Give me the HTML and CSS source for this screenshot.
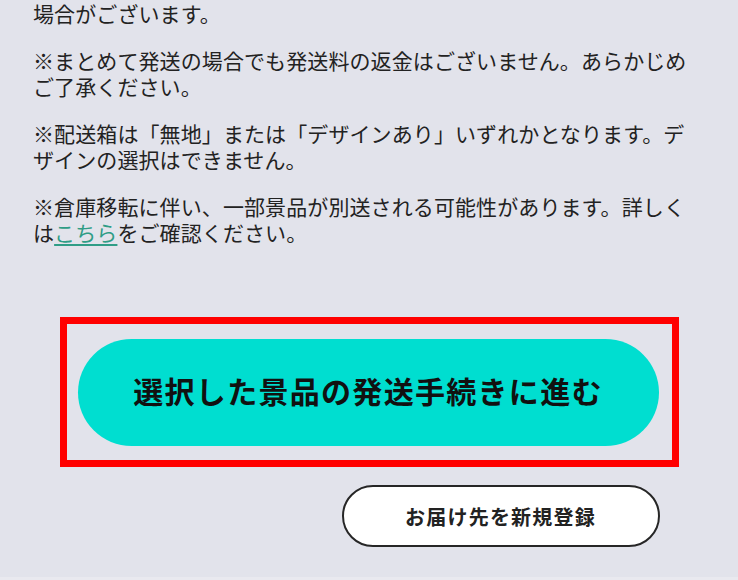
FILE: index.html
```html
<!DOCTYPE html>
<html lang="ja">
<head>
<meta charset="utf-8">
<title>発送手続き</title>
<link rel="stylesheet" href="styles.css">
</head>
<body>
<div class="page">
  <section class="notes">
    <p class="note">場合がございます。</p>
    <p class="note">※まとめて発送の場合でも発送料の返金はございません。あらかじめご了承ください。</p>
    <p class="note">※配送箱は「無地」または「デザインあり」いずれかとなります。デザインの選択はできません。</p>
    <p class="note">※倉庫移転に伴い、一部景品が別送される可能性があります。詳しくは<a class="link" href="#">こちら</a>をご確認ください。</p>
  </section>
  <section class="actions">
    <div class="highlight">
      <button class="btn-primary" type="button">選択した景品の発送手続きに進む</button>
    </div>
    <div class="secondary-row">
      <button class="btn-secondary" type="button">お届け先を新規登録</button>
    </div>
  </section>
</div>
<div class="bottom-strip"></div>
</body>
</html>
```
FILE: styles.css
```css
html, body {
  margin: 0;
  padding: 0;
}
body {
  background: #e2e3eb;
  font-family: "Noto Sans CJK JP", "Noto Sans", sans-serif;
  color: #222222;
  width: 738px;
  height: 580px;
  overflow: hidden;
  display: flex;
  flex-direction: column;
}
.page {
  flex: 1;
  display: flex;
  flex-direction: column;
}
.notes {
  padding: 0 33px;
}
.note {
  margin: 0 0 21px 0;
  font-size: 21px;
  line-height: 26px;
  letter-spacing: 0.1px;
}
.link {
  color: #2f9d86;
  text-decoration: underline;
  text-underline-offset: 3px;
  text-decoration-thickness: 1.5px;
}
.actions {
  margin-top: 51px;
  display: flex;
  flex-direction: column;
  align-items: center;
}
.highlight {
  width: 619px;
  box-sizing: border-box;
  border: 7px solid #ff0000;
  padding: 15px 13px 14px 11px;
}
.btn-primary {
  display: block;
  width: 100%;
  height: 107px;
  border: none;
  border-radius: 54px;
  background: #00ded0;
  color: #111111;
  font-family: "Noto Sans CJK JP", "Noto Sans", sans-serif;
  font-weight: 700;
  font-size: 30px;
  letter-spacing: 1.3px;
  padding: 0 0 5px 0;
}
.secondary-row {
  width: 581px;
  margin-top: 18px;
  display: flex;
  justify-content: flex-end;
}
.btn-secondary {
  width: 318px;
  height: 62px;
  box-sizing: border-box;
  border: 2px solid #262626;
  border-radius: 31px;
  background: #ffffff;
  color: #222222;
  font-family: "Noto Sans CJK JP", "Noto Sans", sans-serif;
  font-weight: 700;
  font-size: 20px;
  letter-spacing: 1.2px;
  padding: 0;
}
.bottom-strip {
  height: 3px;
  background: #e9e9ef;
}
```
